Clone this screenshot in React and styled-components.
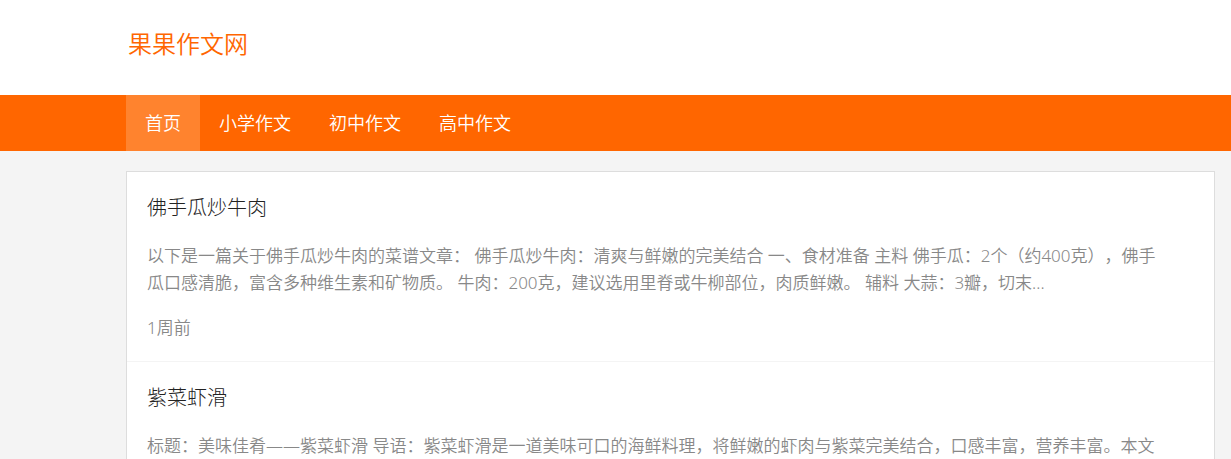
import styled, { createGlobalStyle } from "styled-components";

const menu = ["首页", "小学作文", "初中作文", "高中作文"];

const posts = [
  {
    id: 1,
    title: "佛手瓜炒牛肉",
    text: "以下是一篇关于佛手瓜炒牛肉的菜谱文章： 佛手瓜炒牛肉：清爽与鲜嫩的完美结合 一、食材准备 主料 佛手瓜：2个（约400克），佛手瓜口感清脆，富含多种维生素和矿物质。 牛肉：200克，建议选用里脊或牛柳部位，肉质鲜嫩。 辅料 大蒜：3瓣，切末...",
    date: "1周前",
  },
  {
    id: 2,
    title: "紫菜虾滑",
    text: "标题：美味佳肴——紫菜虾滑 导语：紫菜虾滑是一道美味可口的海鲜料理，将鲜嫩的虾肉与紫菜完美结合，口感丰富，营养丰富。本文",
  },
];

export default function App() {
  return (
    <>
      <GlobalStyle />
      <Header>
        <Logo href="#">果果作文网</Logo>
      </Header>
      <Nav>
        {menu.map((item, i) => (
          <NavLink href="#" key={item} $active={i === 0}>{item}</NavLink>
        ))}
      </Nav>
      <Main>
        <List>
          {posts.map((post) => (
            <Post key={post.id}>
              <Title><a href="#">{post.title}</a></Title>
              <Text>{post.text}</Text>
              {post.date && <PostDate>{post.date}</PostDate>}
            </Post>
          ))}
        </List>
      </Main>
    </>
  );
}

const GlobalStyle = createGlobalStyle`
  * {
    box-sizing: border-box;
  }

  html {
    overflow: hidden;
  }

  body {
    margin: 0;
    background-color: #f4f4f4;
    font-family: "Noto Sans", "Noto Sans CJK SC", sans-serif;
    font-size: 17px;
    font-weight: 350;
    color: #888;
    text-spacing-trim: space-all;
  }

  a {
    color: inherit;
    text-decoration: none;
  }
`
const Header = styled.header`
  display: flex;
  align-items: center;
  height: 95px;
  padding: 0 16px 10px 128px;
  background-color: #fff;
`
const Logo = styled.a`
  font-family: "Noto Sans CJK SC", sans-serif;
  font-size: 24px;
  color: #f60;
`
const Nav = styled.nav`
  display: flex;
  padding-left: 126px;
  background-color: #f60;
`
const NavLink = styled.a`
  padding: 0 19px;
  font-size: 18px;
  line-height: 56px;
  color: #fff;
  background-color: ${({ $active }) => ($active ? "#ff832e" : "transparent")};
`
const Main = styled.main`
  padding: 20px 16px 0 126px;
`
const List = styled.div`
  border: 1px solid #ddd;
  border-bottom: 0;
  background-color: #fff;
`
const Post = styled.article`
  padding: 20px;
  border-bottom: 1px solid #f4f4f4;

  &:last-child {
    padding-bottom: 0;
    border-bottom: 0;
  }
`
const Title = styled.h2`
  margin: 0 0 18px;
  font-size: 20px;
  font-weight: 300;
  line-height: 32px;
  color: #222;
`
const Text = styled.p`
  margin: 0;
  padding-right: 32px;
  line-height: 27px;
`
const PostDate = styled.div`
  margin-top: 18px;
  line-height: 27px;
`
